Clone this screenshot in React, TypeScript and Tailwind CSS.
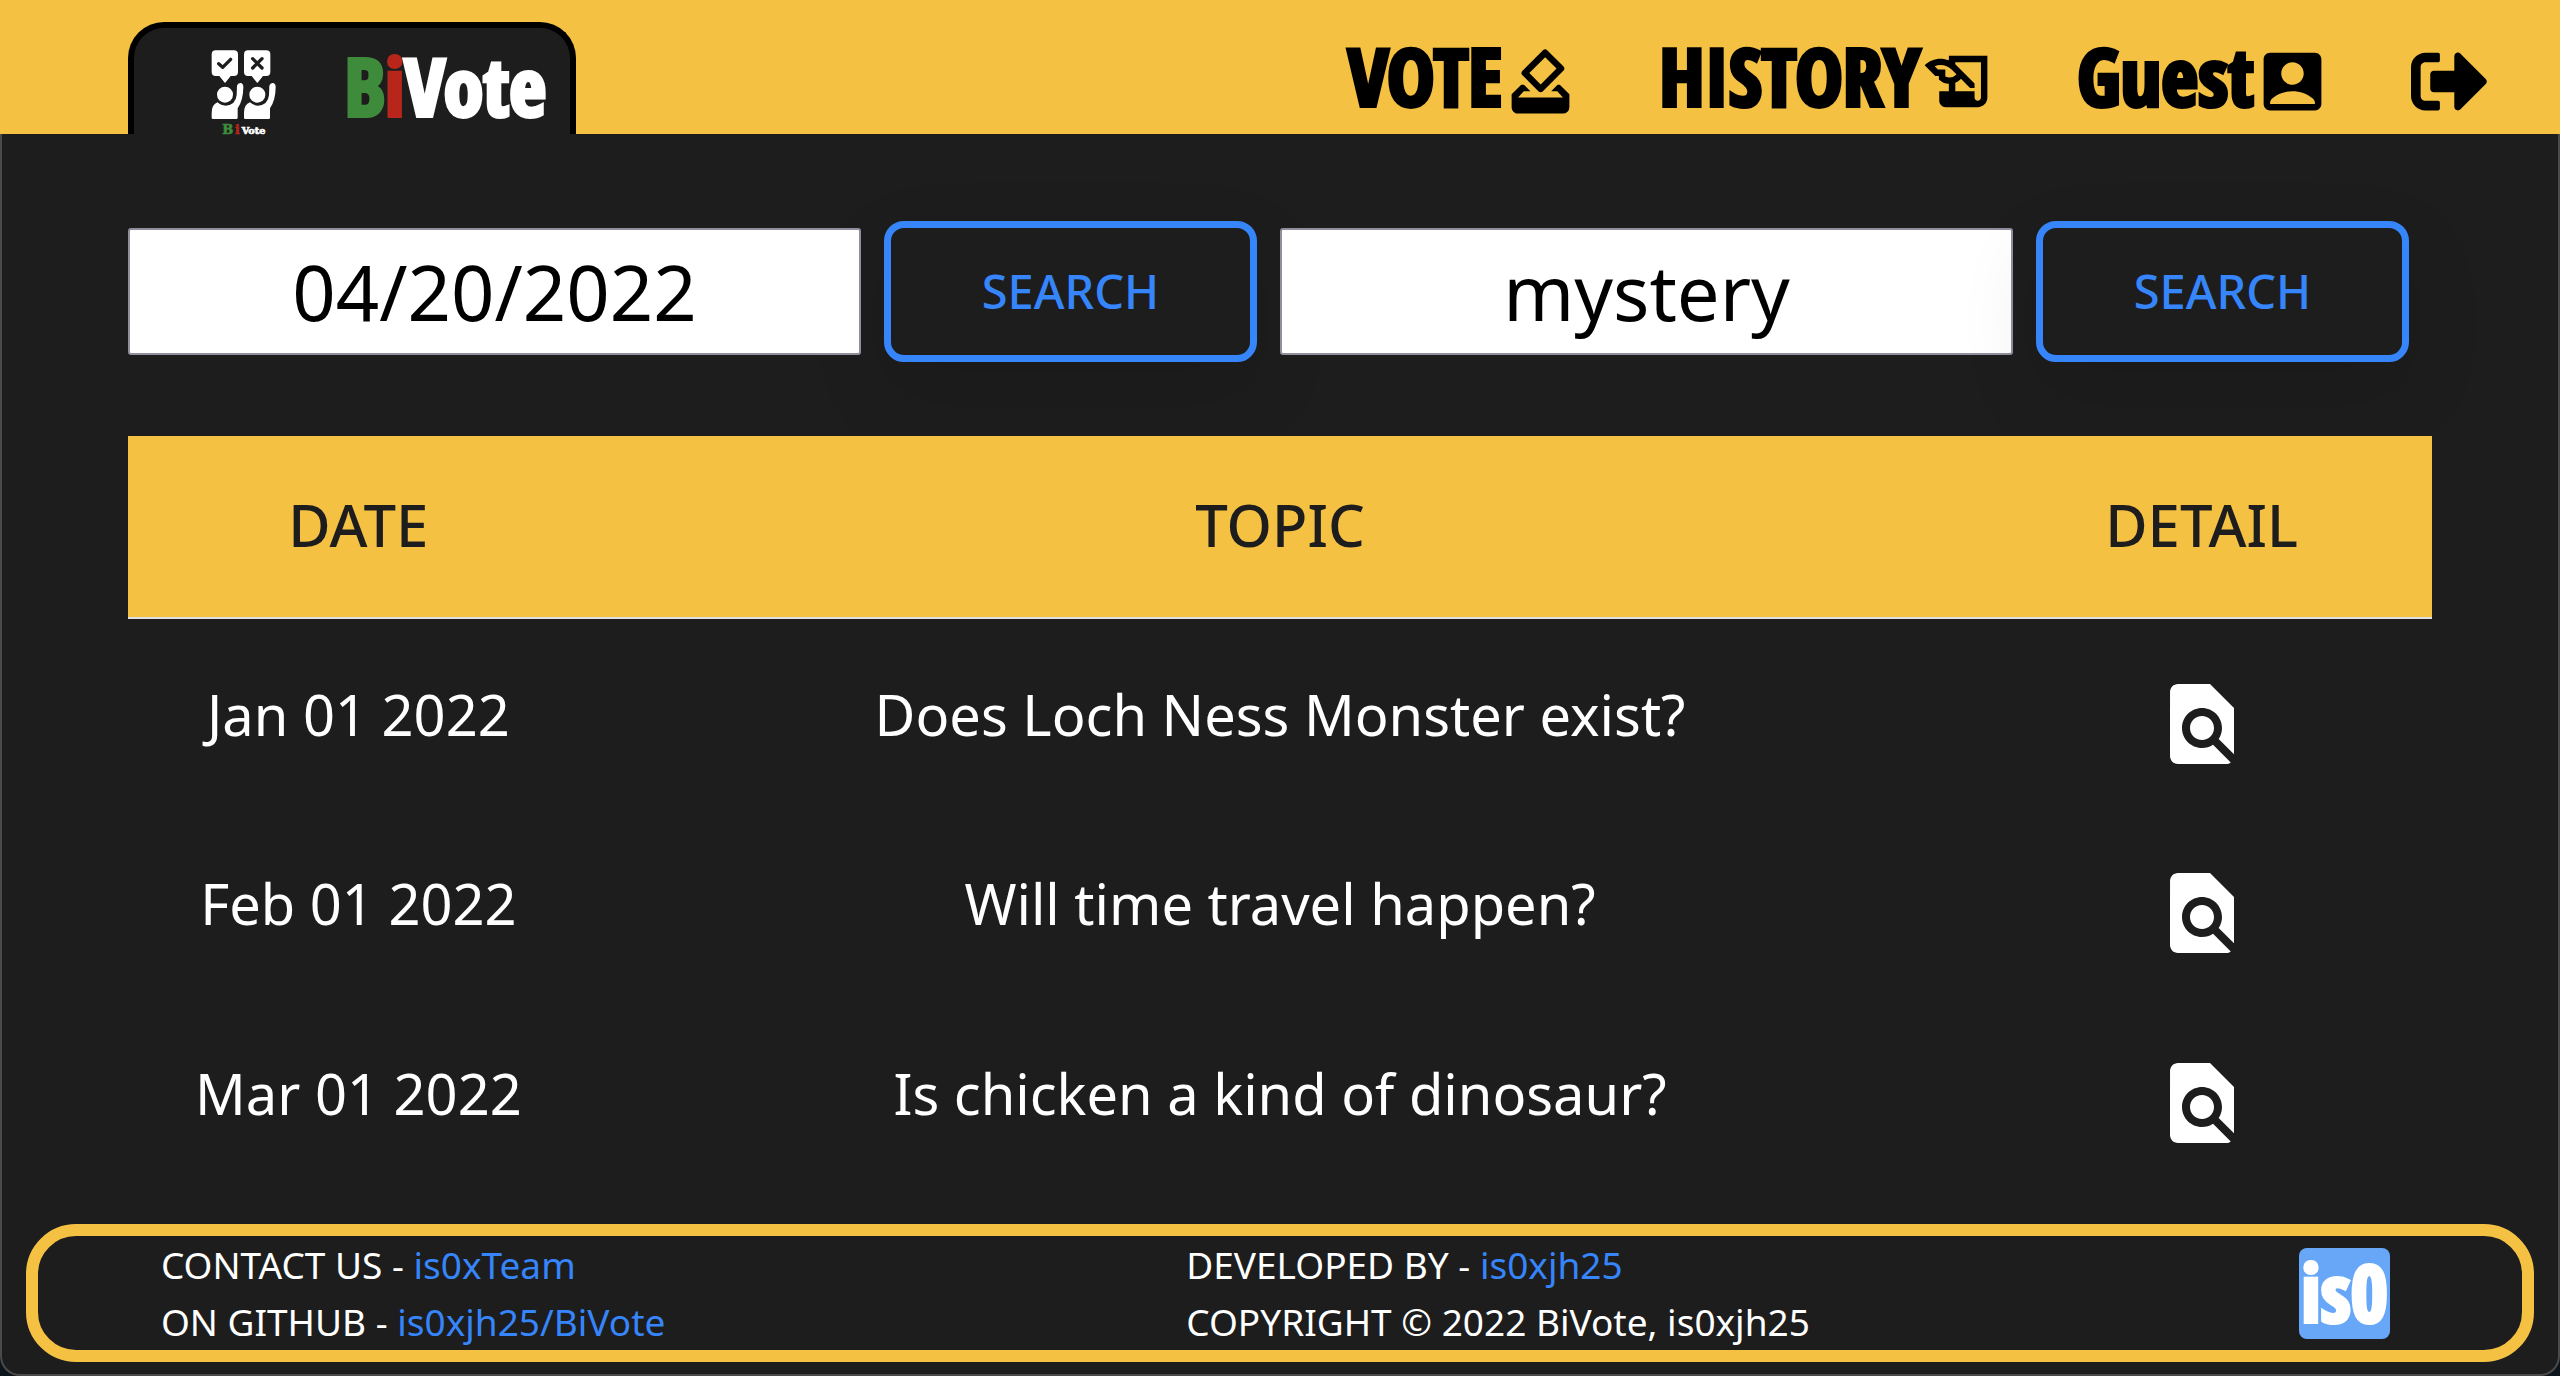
import type { ReactNode } from "react";
import { FaSignOutAlt } from "react-icons/fa";
import { MdAccountBox, MdFindInPage, MdHistoryEdu, MdHowToVote } from "react-icons/md";

const rows = [
  { date: "Jan 01 2022", topic: "Does Loch Ness Monster exist?" },
  { date: "Feb 01 2022", topic: "Will time travel happen?" },
  { date: "Mar 01 2022", topic: "Is chicken a kind of dinosaur?" },
];

function Voter() {
  return (
    <g>
      <path
        fill="#fff"
        d="M32 16H87Q99 16 99 28V81Q99 93 87 93H77L62 112Q60 115 58 112L43 93H32Q20 93 20 81V28Q20 16 32 16Z"
      />
      <circle cx="60" cy="149" r="24" fill="#fff" />
      <path
        fill="#fff"
        d="M20 218V204Q20 178 38 172Q48 182 62 182Q92 180 95 150L96 122Q98 114 106 114Q115 115 115 126Q115 165 98 190V218Q98 222 94 222H24Q20 222 20 218Z"
      />
    </g>
  );
}

function VotersLogo() {
  return (
    <svg viewBox="0 0 240 285" className="h-[95px] w-20 shrink-0" role="img" aria-label="BiVote logo">
      <Voter />
      <path d="M41 56L53 67L77 43" fill="none" stroke="#1d1d1d" strokeWidth="10" strokeLinecap="round" strokeLinejoin="round" />
      <g transform="translate(97 0)">
        <Voter />
        <path d="M46 41L74 69M74 41L46 69" fill="none" stroke="#1d1d1d" strokeWidth="10" strokeLinecap="round" />
      </g>
      <g fontFamily="'DejaVu Serif', serif" fontWeight="bold" strokeWidth="2">
        <text x="52" y="267" fontSize="39" fill="#3e8b3b" stroke="#3e8b3b">B</text>
        <text x="90" y="267" fontSize="37" fill="#b8261b" stroke="#b8261b">i</text>
        <text x="110" y="267" fontSize="29" fill="#fff" stroke="#fff">Vote</text>
      </g>
    </svg>
  );
}

function NavLink({ label, children }: { label: string; children: ReactNode }) {
  return (
    <a href="#" className="flex items-center">
      <span className="[-webkit-text-stroke:4px_black]">{label}</span>
      <span className="mt-3 text-[77px]">{children}</span>
    </a>
  );
}

function SearchBox({ label, value, raised = false }: { label: string; value: string; raised?: boolean }) {
  return (
    <form className="flex items-center gap-[23px] pr-[23px]" onSubmit={(e) => e.preventDefault()}>
      <input
        type="text"
        aria-label={label}
        defaultValue={value}
        className={
          "h-[127px] min-w-0 flex-1 rounded-[3px] border-2 border-[#8f8f9d] bg-white text-center text-[76px] text-black" +
          (raised ? " relative z-10" : "")
        }
      />
      <button
        type="submit"
        className="h-[141px] w-[373px] rounded-[20px] border-[7px] border-[#3685fa] text-[47px] font-medium text-[#3685fa] shadow-[0_30px_80px_rgba(0,0,0,0.1)]"
      >
        SEARCH
      </button>
    </form>
  );
}

export default function App() {
  return (
    <div className="min-h-screen bg-[#0d151c] font-['Noto_Sans',sans-serif]">
      <div className="flex min-h-screen flex-col rounded-b-[20px] bg-[#1d1d1d] shadow-[inset_0_0_0_2px_#4a4a4a]">
        <header className="flex h-[134px] items-end justify-between bg-[#f5c143] pr-[72px] pl-[5%] font-['Open_Sans_Condensed','Roboto_Condensed',sans-serif] text-[80px] leading-none">
          <a
            href="#"
            className="flex h-28 w-[448px] items-start justify-between rounded-t-[36px] border-6 border-b-0 border-black bg-[#1d1d1d] pt-[17px] pr-6 pl-[71px]"
          >
            <VotersLogo />
            <span className="text-white [-webkit-text-stroke:4px]">
              <span className="text-[#3e8b3b]">B</span>
              <span className="text-[#b8261b]">i</span>
              Vote
            </span>
          </a>
          <nav className="flex h-full items-center gap-20 pt-[30px] pb-[14px] text-black">
            <NavLink label="VOTE"><MdHowToVote /></NavLink>
            <NavLink label="HISTORY"><MdHistoryEdu /></NavLink>
            <NavLink label="Guest"><MdAccountBox /></NavLink>
            <button type="button" aria-label="Log out" className="mt-3 text-[77px]"><FaSignOutAlt /></button>
          </nav>
        </header>

        <main className="flex-1 px-[5%] pt-[87px]">
          <div className="grid grid-cols-2">
            <SearchBox label="Search by date" value="04/20/2022" raised />
            <SearchBox label="Search by topic" value="mystery" />
          </div>
          <table className="relative mt-[74px] w-full table-fixed border-collapse text-center text-[56px] text-white">
            <thead>
              <tr className="h-[182px] border-b-2 border-[#e0e0e0] bg-[#f5c143] text-[58px] text-[#1d1d1d]">
                <th className="w-1/5 pb-1 font-medium">DATE</th>
                <th className="w-3/5 pb-1 font-medium">TOPIC</th>
                <th className="w-1/5 pb-1 font-medium">DETAIL</th>
              </tr>
            </thead>
            <tbody>
              {rows.map((row) => (
                <tr key={row.date} className="h-[190px]">
                  <td>{row.date}</td>
                  <td>{row.topic}</td>
                  <td>
                    <button type="button" aria-label={`Details: ${row.topic}`} className="mx-auto mt-5 block text-[96px]">
                      <MdFindInPage />
                    </button>
                  </td>
                </tr>
              ))}
            </tbody>
          </table>
        </main>

        <footer className="mx-[26px] mb-[14px] flex h-[138px] items-center rounded-[50px] border-12 border-[#f5c143] pr-[132px] pl-[4.8%] text-[37px] leading-[57px] text-white">
          <div className="w-[46%]">
            <p>CONTACT US - <a href="#" className="text-[#3685fa]">is0xTeam</a></p>
            <p>ON GITHUB - <a href="#" className="text-[#3685fa]">is0xjh25/BiVote</a></p>
          </div>
          <div className="flex-1">
            <p>DEVELOPED BY - <a href="#" className="text-[#3685fa]">is0xjh25</a></p>
            <p>COPYRIGHT © 2022 BiVote, is0xjh25</p>
          </div>
          <a
            href="#"
            className="flex size-[91px] items-center justify-center rounded-lg bg-[#68a7f8] pb-1 font-['Open_Sans_Condensed','Roboto_Condensed',sans-serif] text-[80px] leading-none [-webkit-text-stroke:4px]"
          >
            is0
          </a>
        </footer>
      </div>
    </div>
  );
}
